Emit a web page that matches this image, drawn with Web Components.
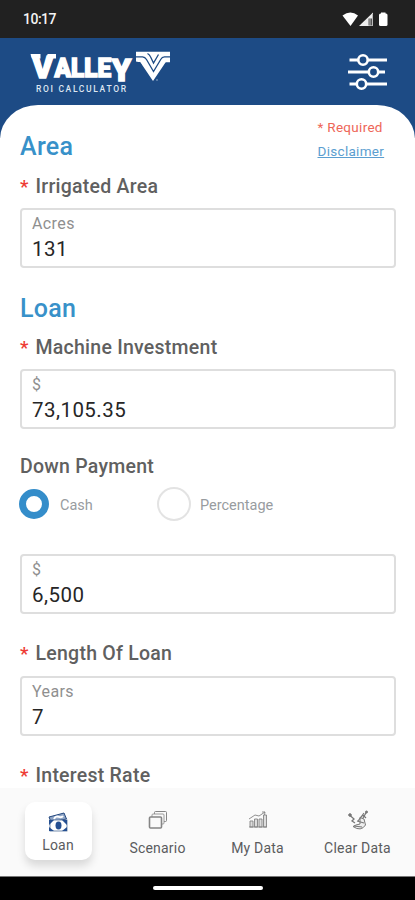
<!DOCTYPE html>
<html lang="en"><head><meta charset="utf-8"><title>Valley ROI Calculator</title>
<style>html,body{margin:0;height:100%;background:#fff;overflow:hidden}body{font-family:Roboto,"Liberation Sans",sans-serif}</style></head>
<body><roi-app></roi-app>
<script>
const define = (name, html) => customElements.define(name, class extends HTMLElement {
  constructor() {
    super();
    const t = document.createElement('template');
    t.innerHTML = html;
    this.attachShadow({mode: 'open'}).append(t.content.cloneNode(true));
  }
});

define('status-bar', `<style>
:host{display:flex;box-sizing:border-box;height:38px;flex:none;background:#212121;color:#f4f4f4;justify-content:space-between;padding:0 26px 0 23px}
span{font-size:14px;font-weight:500;line-height:39px;letter-spacing:-.5px}
svg{display:block}
</style><span>10:17</span>
<svg width="48" height="38" viewBox="341 0 48 38"><path d="M342.500 15.500Q350.500 9.500 358 15.500L350.500 26Z" fill="#fff"/><path d="M359 26L373 12.500V26Z" fill="#eee"/><path d="M368.500 18.500h4v7h-4z" fill="#555"/><path d="M370 18v8M372.500 14v12" stroke="#bbb"/><rect x="379" y="13.500" width="8.500" height="12.500" rx="1.500" fill="#fff"/><path d="M381 12.500h4.500v2H381z" fill="#fff"/></svg>`);

define('valley-logo', `<style>
:host{display:block}svg{display:block}text{font-family:Roboto,"Liberation Sans",sans-serif;fill:#fff}
.w{font-weight:900;stroke:#fff;stroke-width:1.500;stroke-linejoin:miter}
.s{font-size:8.500px;font-weight:500;fill:#dfe7f2}
</style><svg width="145" height="50" viewBox="29 48 145 50">
<text class="w" y="77.500"><tspan x="32" font-size="32">V</tspan><tspan x="54.500" y="76.500" font-size="26" textLength="56.500" lengthAdjust="spacingAndGlyphs">ALLE</tspan><tspan x="111.800" y="81" font-size="31">Y</tspan></text>
<path d="M30.500 54h10v4.500h-8.500zM47.500 54h8.500v4.500h-9z" fill="#fff"/>
<path d="M136 51.700H170V62.500H165.500L153 81L140.500 62.500L136 61.500Z" fill="#fff"/>
<path d="M136 56.800H142.500Q145 57 146.500 59.500L153.500 71.500L161 59Q162 57 164.500 56.800H170M147.500 53.500Q149.500 54.500 150.500 56.800L153.500 63L158.500 54.500" fill="none" stroke="#1d4b85" stroke-width="1.300"/>
<path d="M135.500 62H140L142 65.500H135.500ZM166 62.500H171V66H164Z" fill="#1d4b85"/>
<circle cx="157" cy="80" r=".7" fill="#b9c9df"/>
<text class="s" x="36" y="92.300" textLength="90">ROI CALCULATOR</text></svg>`);

define('app-header', `<style>
:host{display:flex;box-sizing:border-box;height:100px;flex:none;background:#1d4b85;justify-content:space-between;padding:10px 25px 0 29px}
svg{display:block}</style><valley-logo></valley-logo>
<svg width="44" height="50" viewBox="346 48 44 50" fill="none" stroke="#fff"><path d="M349.500 60H387M348 72H385M349.500 84H387" stroke-width="3.200"/><g fill="#1d4b85" stroke-width="2.600"><circle cx="363" cy="60" r="4.700"/><circle cx="373.500" cy="72" r="4.700"/><circle cx="361.500" cy="84" r="4.700"/></g></svg>`);

define('section-title', `<style>:host{display:block;font-size:25px;line-height:30px;height:30px;font-weight:500;color:#3891c9;letter-spacing:.3px}</style><slot></slot>`);

define('field-label', `<style>:host{display:flex;height:24px;font-size:19.500px;line-height:24px;font-weight:500;color:#606060;letter-spacing:.25px}
i{display:none;font-style:normal;font-size:19px;line-height:23px;color:#ee3b34;width:15.500px;letter-spacing:0}:host([required]) i{display:block}</style><i>*</i><span><slot></slot></span>`);

define('value-field', `<style>:host{display:block;box-sizing:border-box;height:60px;border:2px solid #dedede;border-radius:4px;padding:4px 10px;background:#fff}
.u{font-size:16px;line-height:20px;color:#8f8f8f;letter-spacing:.4px}.v{font-size:20.500px;line-height:28px;color:#262626;letter-spacing:.45px;margin-top:1px}</style>
<div class="u"><slot name="unit"></slot></div><div class="v"><slot></slot></div>`);

define('radio-option', `<style>:host{display:flex;align-items:center;height:34px;font-size:14.500px;color:#989c9f;letter-spacing:0}
b{box-sizing:border-box;width:34px;height:34px;border:2px solid #e3e3e3;border-radius:50%;margin-right:9px}
:host([checked]) b{width:30px;height:30px;border:7px solid #348dca;margin:0 11px 0 2px}span{padding-top:2px}</style><b></b><span><slot></slot></span>`);

define('nav-item', `<style>:host{display:flex;box-sizing:border-box;width:100px;height:88px;flex-direction:column;align-items:center;padding-top:20px;font-size:14px;line-height:18px;color:#5a5c5e;letter-spacing:.2px}
slot[name=icon]{display:block;height:24px}span{margin-top:7px;white-space:nowrap}
:host([active]){width:67px;height:58px;margin:14px 16px 0 17px;padding-top:9px;background:#fff;border-radius:10px;box-shadow:0 6px 9px #0002}
:host([active]) span{margin-top:1px}</style>
<slot name="icon"></slot><span><slot></slot></span>`);

define('tab-bar', `<style>:host{display:flex;box-sizing:border-box;height:88px;flex:none;background:#fafafa;padding-left:7.500px}svg{display:block}</style>
<nav-item active><svg slot="icon" width="24" height="24" viewBox="0 0 24 24"><path d="M3 6L18 2L20.500 8L5 11Z" fill="#8fa5c6" stroke="#24487f"/><path d="M8 8C11 2 14 9 17 5" fill="none" stroke="#fff" stroke-width="2"/><rect x="4" y="9" width="17" height="11" fill="#fff" stroke="#547199" stroke-width=".8"/><path d="M3 9h5L3 14zM16 9h5v5zM3 16v4h5zM21 16v4h-5z" fill="#244f91"/><ellipse cx="12.500" cy="14.500" rx="3" ry="4" fill="#244f91"/></svg>Loan</nav-item>
<nav-item><svg slot="icon" width="24" height="24" viewBox="0 0 24 24" fill="#fafafa" stroke="#858585"><rect x="8.500" y="3.500" width="12" height="10" rx="1"/><rect x="6" y="6" width="12" height="10" rx="1" stroke="#9a9a9a"/><rect x="3.500" y="9" width="12" height="11" rx="1" stroke-width="1.600"/></svg>Scenario</nav-item>
<nav-item><svg slot="icon" width="24" height="24" viewBox="0 0 24 24" fill="#ddd" stroke="#858585" stroke-width=".9"><path d="M4 13h3v6H4zM8.500 11h3v8h-3zM13 11h3v8h-3zM17.500 7h3v12h-3z"/><path d="M3 11L9 7L13 8L19 4M16 4L19 4L18.500 7M3 19h18" fill="none"/></svg>My Data</nav-item>
<nav-item><svg slot="icon" width="24" height="24" viewBox="0 0 24 24" fill="none" stroke="#777"><path d="M20.500 4L17 10M3.500 7L8 11L6 13L9 15" stroke-width="1.300"/><path d="M14 9.500L18 11L19.500 17Q15 24 7 18.500L10 17L14 16Z" fill="#eee"/><path d="M14 10L17 7L20 10M11 13L18 15M8 18L16 19M18 5L12 13" stroke-width="1.200"/><circle cx="4" cy="7" r="1.300" fill="#777"/><circle cx="20.500" cy="4" r="1" fill="#777"/></svg>Clear Data</nav-item>`);

define('home-bar', `<style>:host{display:flex;box-sizing:border-box;height:24px;flex:none;background:#000;border-top:1px solid #777;justify-content:center;padding-top:9px}i{height:4px;width:110px;background:#fff;border-radius:2px}</style><i></i>`);

define('roi-app', `<style>
:host{display:flex;flex-direction:column;width:415px;height:900px;overflow:hidden;background:#fff}
main{flex:1;min-height:0;overflow:hidden;background:#fff;border-radius:38px 38px 0 0/34px 34px 0 0;margin-top:-33px;position:relative;box-sizing:border-box;padding:14px 19px 0 20px}
.top{display:flex;justify-content:space-between;height:58px}
.top section-title{margin-top:13px}
.links{width:78.500px;font-size:13.500px;line-height:16px;color:#ee6658;letter-spacing:.3px}
.links a{display:block;margin-top:8px;color:#5b9ed0;text-decoration:underline}
value-field{margin-top:9px}.loan{margin-top:26px}
.down{margin-top:26px}.radios{display:flex;margin:8px 0 0 -3px}.radios radio-option:first-child{width:140px}
.cash{margin-top:33px}.len,.rate{margin-top:28px}
</style><status-bar></status-bar><app-header></app-header>
<main><div class="top"><section-title>Area</section-title><div class="links">* Required<a>Disclaimer</a></div></div>
<field-label required style="margin-top:-2px">Irrigated Area</field-label><value-field><span slot="unit">Acres</span>131</value-field>
<section-title class="loan">Loan</section-title><field-label required style="margin-top:12px">Machine Investment</field-label><value-field><span slot="unit">$</span>73,105.35</value-field>
<field-label class="down">Down Payment</field-label><div class="radios"><radio-option checked>Cash</radio-option><radio-option>Percentage</radio-option></div>
<value-field class="cash"><span slot="unit">$</span>6,500</value-field>
<field-label required class="len">Length Of Loan</field-label><value-field style="margin-top:10px"><span slot="unit">Years</span>7</value-field>
<field-label required class="rate">Interest Rate</field-label></main>
<tab-bar></tab-bar><home-bar></home-bar>`);
</script></body></html>
